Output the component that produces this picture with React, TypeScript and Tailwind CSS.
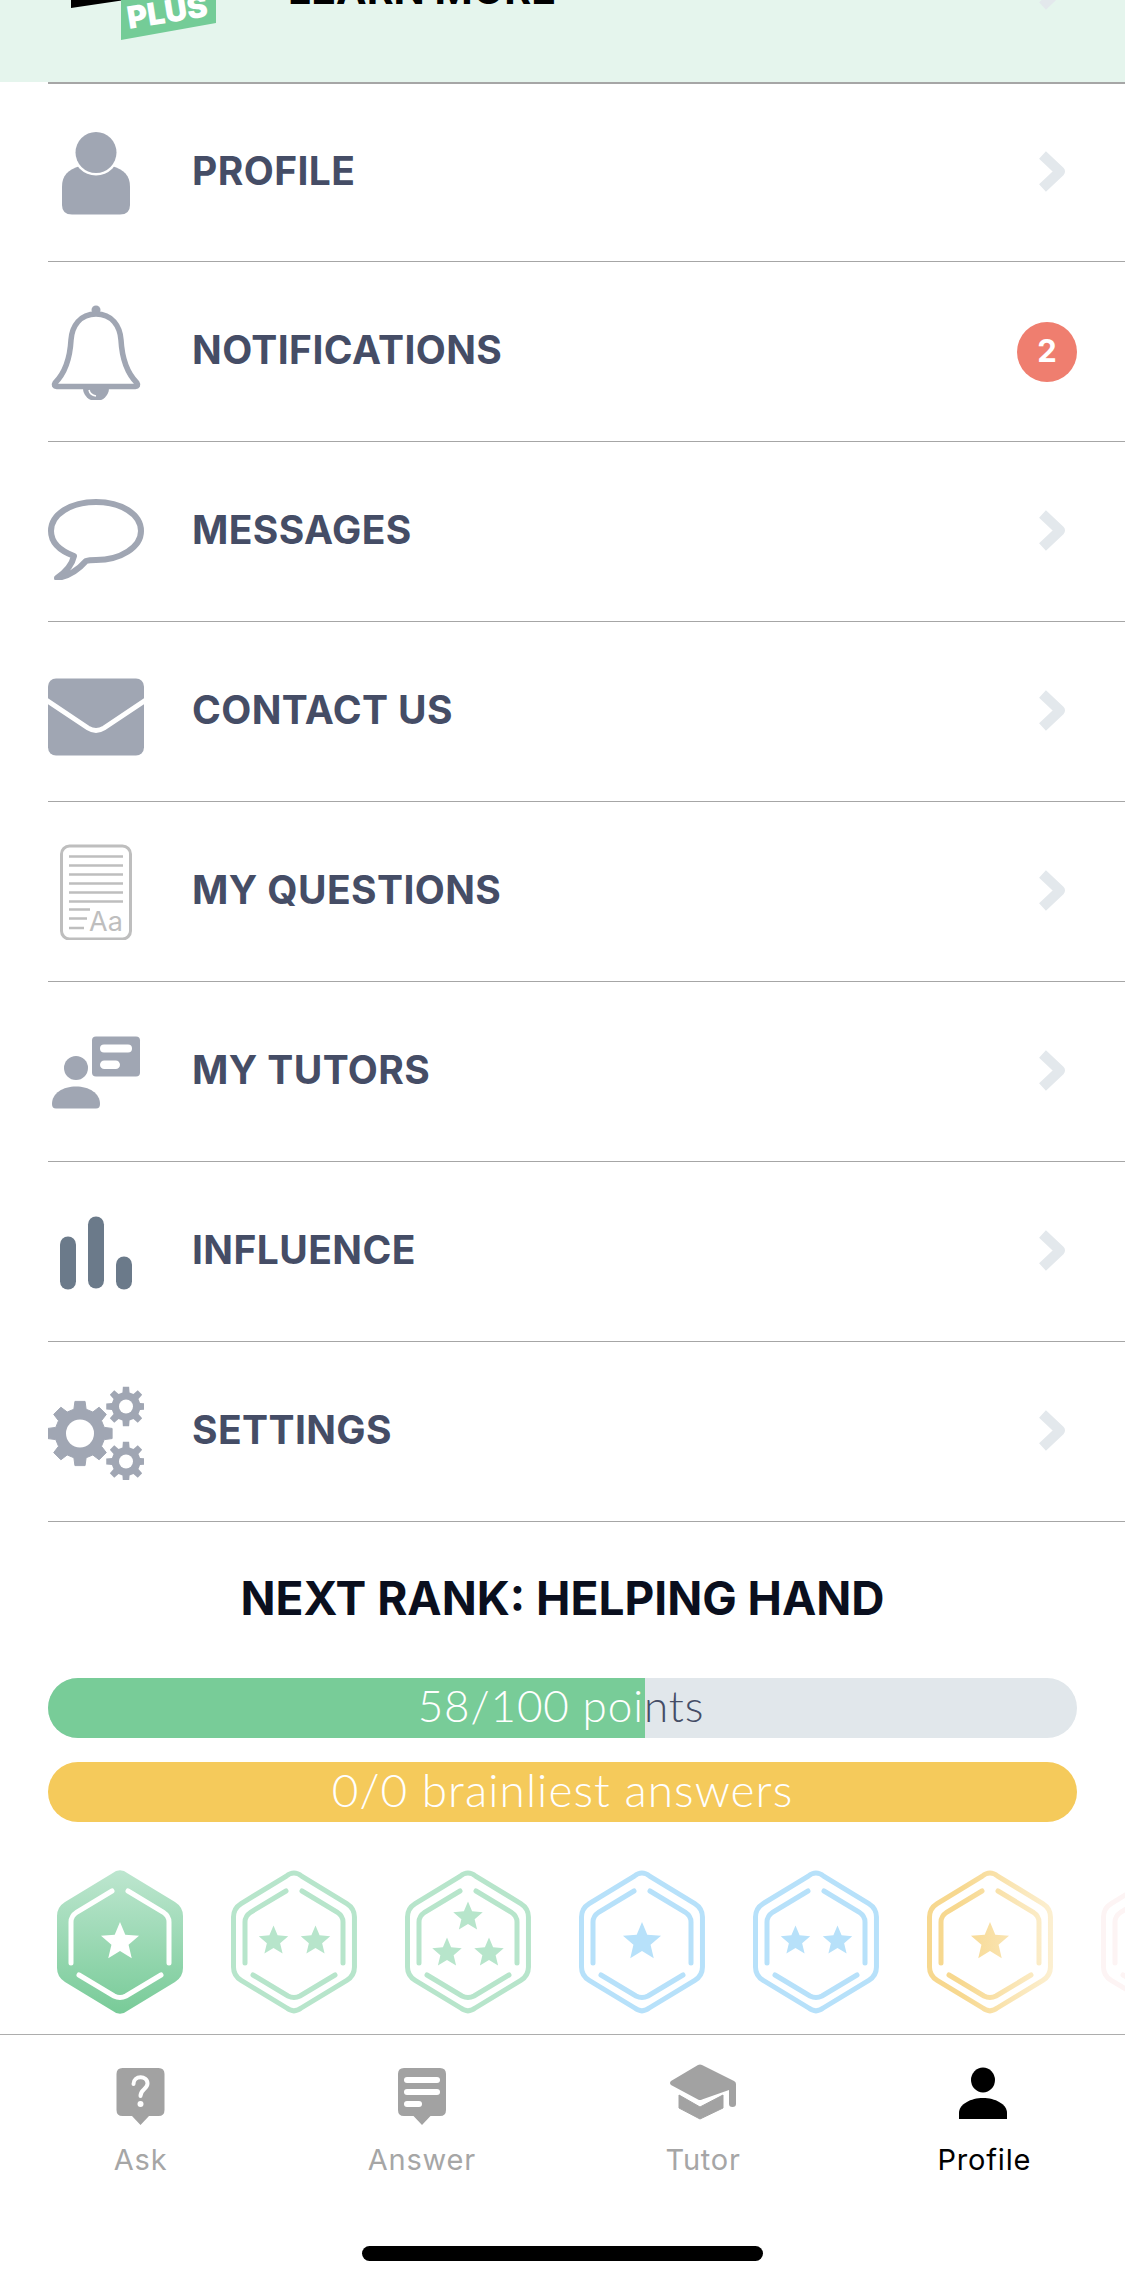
import React from 'react';

const star = (cx: number, cy: number, r: number) => {
  const pts: string[] = [];
  for (let i = 0; i < 10; i++) {
    const rad = i % 2 === 0 ? r : r * 0.45;
    const a = -Math.PI / 2 + (i * Math.PI) / 5;
    pts.push(`${(cx + rad * Math.cos(a)).toFixed(2)},${(cy + rad * Math.sin(a)).toFixed(2)}`);
  }
  return pts.join(' ');
};

const gear = (cx: number, cy: number, outer: number, root: number, teeth: number, offset = 0) => {
  const pts: string[] = [];
  const step = (Math.PI * 2) / teeth;
  for (let i = 0; i < teeth; i++) {
    const a = offset + i * step;
    [
      [root, -0.3],
      [outer, -0.19],
      [outer, 0.19],
      [root, 0.3],
    ].forEach(([rad, t]) => {
      const b = a + t * step * 1.05;
      pts.push(`${(cx + rad * Math.cos(b)).toFixed(2)},${(cy + rad * Math.sin(b)).toFixed(2)}`);
    });
  }
  return pts.join(' ');
};

const icon = 'block w-[96px] h-[96px] shrink-0';

const ProfileIcon = () => (
  <svg viewBox="0 0 96 96" className={icon}>
    <path d="M14 80 V62 C14 50 20 45 32 41 H64 C76 45 82 50 82 62 V80 Q82 89.500 72 89.500 H24 Q14 89.500 14 80 Z" fill="#a0a6b3" />
    <circle cx="48" cy="27.500" r="23" fill="#fff" />
    <circle cx="48" cy="27.500" r="20.500" fill="#a0a6b3" />
  </svg>
);

const BellIcon = () => (
  <svg viewBox="0 0 96 96" className={icon}>
    <path d="M35 84 A13 13 0 0 0 61 84 Z" fill="#a0a6b3" />
    <path d="M41 86 Q42 91 48 92" fill="none" stroke="#fff" strokeWidth="1.500" />
    <circle cx="48" cy="6" r="4.500" fill="#a0a6b3" />
    <path
      d="M48 10 C32 10 24 22 23 36 C22 54 18 68 7 79 Q5 82 9 82.500 H87 Q91 82 89 79 C78 68 74 54 73 36 C72 22 64 10 48 10 Z"
      fill="none"
      stroke="#a0a6b3"
      strokeWidth="5.500"
      strokeLinejoin="round"
    />
  </svg>
);

const MessageIcon = () => (
  <svg viewBox="0 0 96 96" className={icon}>
    <path
      d="M26 72 C10 66 3 57 3 47 C3 30 23 18 48 18 C73 18 93 30 93 47 C93 63 73 76 48 76 C44 76 41 76 38 77 C31 85 22 92 9 94 C18 88 24 81 26 72 Z"
      fill="none"
      stroke="#a0a6b3"
      strokeWidth="6"
      strokeLinejoin="round"
    />
  </svg>
);

const MailIcon = () => (
  <svg viewBox="0 0 96 96" className={icon}>
    <rect x="0" y="14.500" width="96" height="77" rx="8" fill="#a0a6b3" />
    <path d="M-2 36 L40 64 Q48 69 56 64 L98 36" fill="none" stroke="#fff" strokeWidth="5" />
  </svg>
);

const QuestionsIcon = () => (
  <svg viewBox="0 0 96 96" className={icon}>
    <rect x="13.500" y="2" width="69" height="93" rx="8" fill="none" stroke="#bebebe" strokeWidth="3" />
    {[12.5, 21.5, 30.5, 39.5, 48.5, 57.5].map((y) => (
      <line key={y} x1="21" x2="75" y1={y} y2={y} stroke="#bebebe" strokeWidth="2.500" />
    ))}
    <line x1="21" x2="42" y1="65.500" y2="65.500" stroke="#bebebe" strokeWidth="2.500" />
    <line x1="21" x2="39" y1="74.500" y2="74.500" stroke="#bebebe" strokeWidth="2.500" />
    <line x1="21" x2="36" y1="84" y2="84" stroke="#bebebe" strokeWidth="2.500" />
    <text x="41" y="86.500" fontFamily="Inter, sans-serif" fontSize="27" fill="#bebebe">
      Aa
    </text>
  </svg>
);

const TutorsIcon = () => (
  <svg viewBox="0 0 96 96" className={icon}>
    <rect x="44" y="12.500" width="48" height="40" rx="4" fill="#a0a6b3" />
    <rect x="52" y="20.500" width="32" height="8" rx="4" fill="#fff" />
    <rect x="52" y="36.500" width="20" height="8.500" rx="4.250" fill="#fff" />
    <circle cx="28" cy="44" r="12" fill="#a0a6b3" />
    <path d="M4 80 C4 69 15 62.500 28 62.500 C41 62.500 52 69 52 80 Q52 84.500 48 84.500 H8 Q4 84.500 4 80 Z" fill="#a0a6b3" />
  </svg>
);

const InfluenceIcon = () => (
  <svg viewBox="0 0 96 96" className={icon}>
    <rect x="12" y="32.500" width="16" height="53" rx="8" fill="#6b7a8a" />
    <rect x="40" y="12.500" width="16" height="72" rx="8" fill="#6b7a8a" />
    <rect x="68" y="52.500" width="16" height="33" rx="8" fill="#6b7a8a" />
  </svg>
);

const SettingsIcon = () => (
  <svg viewBox="0 0 96 96" className={icon}>
    <polygon points={gear(32, 49.5, 32.5, 25, 8)} fill="#a0a6b3" stroke="#a0a6b3" strokeWidth="1" strokeLinejoin="round" />
    <circle cx="32" cy="49.500" r="14" fill="#fff" />
    <polygon points={gear(78, 22.5, 20, 14.5, 8)} fill="#a0a6b3" />
    <circle cx="78" cy="22.500" r="7" fill="#fff" />
    <polygon points={gear(78, 77.5, 20, 14.5, 8)} fill="#a0a6b3" />
    <circle cx="78" cy="77.500" r="7" fill="#fff" />
  </svg>
);

const Chevron = ({ className }: { className: string }) => (
  <svg viewBox="0 0 28 43" className={className}>
    <path d="M4.500 5 L22 21.500 L4.500 38" fill="none" stroke="#e3e8ec" strokeWidth="10" strokeLinejoin="round" />
  </svg>
);

const rows = [
  { label: 'PROFILE', Icon: ProfileIcon },
  { label: 'NOTIFICATIONS', Icon: BellIcon, badge: 2 },
  { label: 'MESSAGES', Icon: MessageIcon },
  { label: 'CONTACT US', Icon: MailIcon },
  { label: 'MY QUESTIONS', Icon: QuestionsIcon },
  { label: 'MY TUTORS', Icon: TutorsIcon },
  { label: 'INFLUENCE', Icon: InfluenceIcon },
  { label: 'SETTINGS', Icon: SettingsIcon },
];

const outline = 'M55 3.500 Q63 -3 71 3.500 L118 32 Q126 37 126 46 V98 Q126 107 118 112 L71 140.500 Q63 147 55 140.500 L8 112 Q0 107 0 98 V46 Q0 37 8 32 Z';
const innerTop = 'M55 21 L20 42 Q14 46 14 52 V93 M71 21 L106 42 Q112 46 112 52 V93';
const innerBottom = 'M22 105 L57 126 Q63 129 69 126 L104 105';

type BadgeProps = { id: string; color: string; stars: number[][]; filled?: boolean; fade?: string };

const RankBadge = ({ id, color, stars, filled, fade }: BadgeProps) => {
  const paint = fade ? `url(#${id})` : color;
  return (
    <svg viewBox="-3 -3 132 150" className="block w-[132px] h-[150px] shrink-0 -mx-[3px] -my-[3px]">
      <defs>
        <linearGradient id={`${id}-fill`} x1="0" y1="0" x2="0" y2="1">
          <stop offset="0" stopColor="#bde6cf" />
          <stop offset="1" stopColor="#78cb98" />
        </linearGradient>
        {fade && (
          <linearGradient id={id} gradientUnits="userSpaceOnUse" x1="0" y1="0" x2="126" y2="0">
            <stop offset="0.25" stopColor={color} />
            <stop offset="1" stopColor={fade} />
          </linearGradient>
        )}
      </defs>
      {filled ? (
        <path d={outline} fill={`url(#${id}-fill)`} />
      ) : (
        <path d={outline} transform="translate(2.500 2.800) scale(0.96)" fill="none" stroke={paint} strokeWidth="5.200" />
      )}
      <path d={innerTop} fill="none" stroke={filled ? '#fff' : paint} strokeWidth="5" strokeLinecap="round" />
      <path d={innerBottom} fill="none" stroke={filled ? '#fff' : paint} strokeWidth="5" strokeLinecap="round" />
      {stars.map(([x, y, r]) => (
        <polygon key={`${x}-${y}`} points={star(x, y, r)} fill={filled ? '#fff' : paint} />
      ))}
    </svg>
  );
};

const tabIcon = 'block w-[72px] h-[64px]';

const AskIcon = () => (
  <svg viewBox="0 0 72 64" className={tabIcon}>
    <path d="M17.500 5 H53.500 Q59.500 5 59.500 11 V47 Q59.500 53 53.500 53 H44 L35.500 62 L27 53 H17.500 Q11.500 53 11.500 47 V11 Q11.500 5 17.500 5 Z" fill="#a2a2a2" />
    <path d="M28.500 21 C28.500 12 42.500 12 42.500 20.500 C42.500 26 35.500 26 35.500 33" fill="none" stroke="#fff" strokeWidth="4" strokeLinecap="round" />
    <circle cx="35.500" cy="41" r="3" fill="#fff" />
  </svg>
);

const AnswerIcon = () => (
  <svg viewBox="0 0 72 64" className={tabIcon}>
    <path d="M18 5 H54 Q60 5 60 11 V47 Q60 53 54 53 H44.500 L36 62 L27.500 53 H18 Q12 53 12 47 V11 Q12 5 18 5 Z" fill="#a2a2a2" />
    <rect x="18" y="14" width="36" height="6" rx="3" fill="#fff" />
    <rect x="18" y="26" width="36" height="6" rx="3" fill="#fff" />
    <rect x="18" y="38" width="18" height="6" rx="3" fill="#fff" />
  </svg>
);

const TutorIcon = () => (
  <svg viewBox="0 0 72 64" className={tabIcon}>
    <path d="M31 2 Q33 1 35 2 L67 18 Q69 19 69 21 V41 Q69 44 65.500 44 Q62 44 62 41 V27 L35 36.500 Q33 37.500 31 36.500 L4 22 Q2 20 4 18 Z" fill="#a2a2a2" />
    <path d="M12 32 L33 44 L56 32 V45 L33 56 L12 45 Z" fill="#a2a2a2" stroke="#a2a2a2" strokeWidth="1" strokeLinejoin="round" />
  </svg>
);

const TabProfileIcon = () => (
  <svg viewBox="0 0 72 64" className={tabIcon}>
    <ellipse cx="35" cy="17" rx="12" ry="12.500" fill="#000" />
    <path d="M11 56 V50 C11 41 23 35 35 35 C47 35 59 41 59 50 V56 Z" fill="#000" />
  </svg>
);

const tabs = [
  { label: 'Ask', Icon: AskIcon, text: 'text-[#a6a6a6]' },
  { label: 'Answer', Icon: AnswerIcon, text: 'text-[#a6a6a6]' },
  { label: 'Tutor', Icon: TutorIcon, text: 'text-[#a6a6a6]' },
  { label: 'Profile', Icon: TabProfileIcon, text: 'text-black' },
];

const barText = "leading-[55px] font-light text-center font-['Lato',sans-serif] whitespace-nowrap";

const App = () => {
  return (
    <div className="w-[1125px] h-[2284px] bg-white overflow-hidden font-['Inter',sans-serif]">
      {/* Upsell banner, scrolled mostly out of view */}
      <div className="h-[82px] bg-[#e5f5ed] overflow-hidden flex items-start pl-[71px] pr-[59px]">
        <svg viewBox="0 0 145 42" className="block w-[145px] h-[42px] shrink-0">
          <polygon points="0,0 54,0 0,8" fill="#000" />
          <polygon points="50,-2 145,-2 145,23 50,40" fill="#74cc97" />
          <text
            x="0"
            y="0"
            transform="translate(58 29) rotate(-9)"
            fontFamily="Inter, sans-serif"
            fontWeight="900"
            fontSize="31"
            fill="#fff"
          >
            PLUS
          </text>
        </svg>
        <span className="ml-[72px] -mt-[34px] text-[41px] leading-[46px] font-bold text-black whitespace-nowrap">LEARN MORE</span>
        <div className="ml-auto -mt-[32px] w-[28px]">
          <Chevron className="block w-[28px] h-[43px]" />
        </div>
      </div>

      {/* Menu */}
      <div className="ml-[48px] border-t-2 border-[#a6a6a6]">
        {rows.map(({ label, Icon, badge }, i) => (
          <div
            key={label}
            className={`${i === 0 ? 'h-[178px]' : 'h-[180px]'} flex items-center border-b border-[#a6a6a6]`}
          >
            <Icon />
            <span className="ml-[48px] -mt-[3px] text-[39px] font-bold text-[#454d66] tracking-[0.4px]">{label}</span>
            {badge ? (
              <span className="ml-auto mr-[48px] w-[60px] h-[60px] rounded-full bg-[#ef7e6f] text-white text-[31px] font-bold flex items-center justify-center">
                {badge}
              </span>
            ) : (
              <Chevron className="ml-auto mr-[59px] -mt-[3px] block w-[28px] h-[43px]" />
            )}
          </div>
        ))}
      </div>

      {/* Next rank */}
      <h2 className="mt-[46px] text-center text-[46px] leading-[60px] font-bold text-[#0a0f1e] tracking-[0px]">
        NEXT RANK: HELPING HAND
      </h2>
      <div className="mt-[50px] mx-[48px] flex flex-col gap-[24px]">
        <div className="relative h-[60px] rounded-full bg-[#e1e7eb] overflow-hidden">
          <div className={`${barText} text-[44px] tracking-[0.9px] pr-[3px] text-[#454d66]`}>58/100 points</div>
          <div className="absolute left-0 top-0 h-full w-[58%] bg-[#78cc98] overflow-hidden">
            <div className={`${barText} text-[44px] tracking-[0.9px] pr-[3px] text-white w-[1029px]`}>58/100 points</div>
          </div>
        </div>
        <div className={`${barText} text-[46px] tracking-[1.05px] h-[60px] rounded-full bg-[#f5ca5b] text-white`}>
          0/0 brainliest answers
        </div>
      </div>

      {/* Rank badges */}
      <div className="mt-[48px] pb-[20px] pl-[57px] flex gap-[48px] overflow-hidden">
        <RankBadge id="b1" color="#b7e5cb" filled stars={[[63, 72, 20]]} />
        <RankBadge id="b2" color="#b7e5cb" stars={[[42.5, 71, 15.5], [84.5, 71, 15.5]]} />
        <RankBadge id="b3" color="#b7e5cb" stars={[[63, 47, 15.5], [42, 83, 15.5], [84, 83, 15.5]]} />
        <RankBadge id="b4" color="#b7e1fa" stars={[[63, 72, 20]]} />
        <RankBadge id="b5" color="#b7e1fa" stars={[[42.5, 71, 15.5], [84.5, 71, 15.5]]} />
        <RankBadge id="b6" color="#f7d88f" fade="#fcefd0" stars={[[63, 72, 20]]} />
        <RankBadge id="b7" color="#fdf4f4" stars={[]} />
      </div>

      {/* Tab bar */}
      <div className="border-t-[1.5px] border-[#adadad] pt-[28px] grid grid-cols-4">
        {tabs.map(({ label, Icon, text }) => (
          <div key={label} className="flex flex-col items-center">
            <Icon />
            <span className={`mt-[15px] text-[29px] leading-[36px] tracking-[0.8px] ${text}`}>{label}</span>
          </div>
        ))}
      </div>
      <div className="mt-[68px] mx-auto w-[401px] h-[15px] rounded-full bg-black" />
    </div>
  );
};

export default App;
